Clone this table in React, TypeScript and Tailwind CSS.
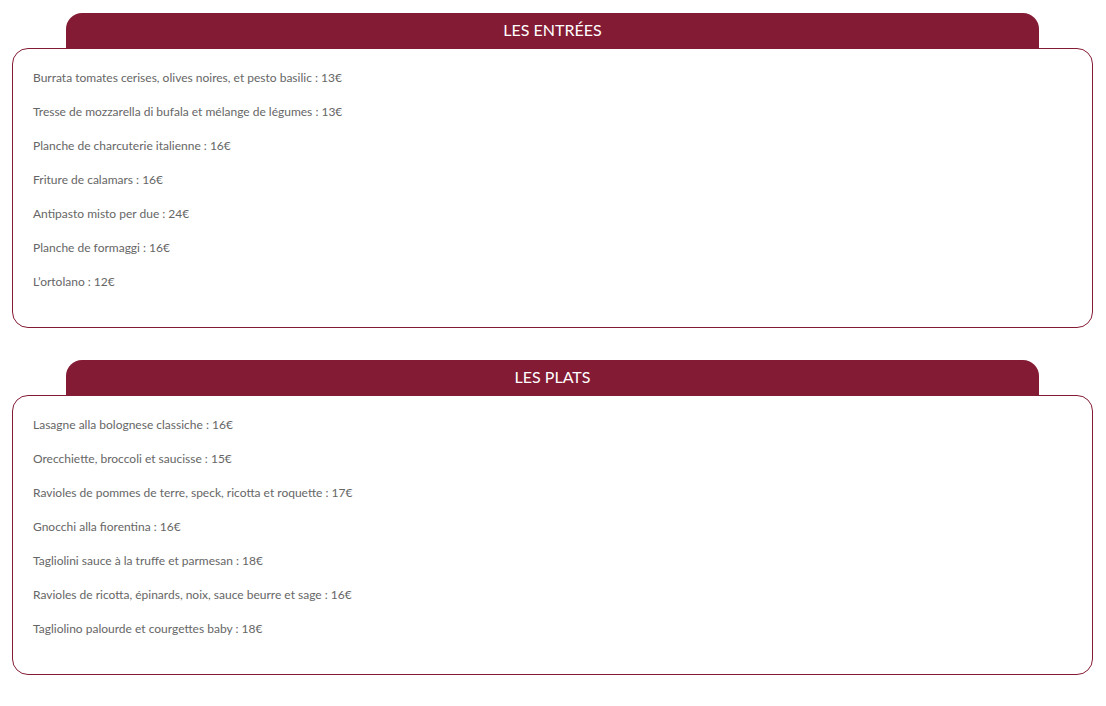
import React from "react";

const sections = [
  {
    title: "LES ENTRÉES",
    items: [
      "Burrata tomates cerises, olives noires, et pesto basilic : 13€",
      "Tresse de mozzarella di bufala et mélange de légumes : 13€",
      "Planche de charcuterie italienne : 16€",
      "Friture de calamars : 16€",
      "Antipasto misto per due : 24€",
      "Planche de formaggi : 16€",
      "L’ortolano : 12€",
    ],
  },
  {
    title: "LES PLATS",
    items: [
      "Lasagne alla bolognese classiche : 16€",
      "Orecchiette, broccoli et saucisse : 15€",
      "Ravioles de pommes de terre, speck, ricotta et roquette : 17€",
      "Gnocchi alla fiorentina : 16€",
      "Tagliolini sauce à la truffe et parmesan : 18€",
      "Ravioles de ricotta, épinards, noix, sauce beurre et sage : 16€",
      "Tagliolino palourde et courgettes baby : 18€",
    ],
  },
];

function MenuSection({ title, items }: { title: string; items: string[] }) {
  return (
    <section className="w-[1081px]">
      <div className="mx-[54px] h-[35px] rounded-t-[16px] bg-[#831b34] flex items-center justify-center">
        <h2 className="text-white text-[16px] leading-none pb-[2px]">{title}</h2>
      </div>
      <div className="border border-[#831b34] rounded-[16px] pt-[20px] px-[20px] h-[280px]">
        {items.map((item) => (
          <p key={item} className="text-[12px] leading-[17px] mb-[17px] text-[#666666]">
            {item}
          </p>
        ))}
      </div>
    </section>
  );
}

export default function App() {
  return (
    <div className="min-h-screen bg-white pt-[13px] pl-[12px] flex flex-col gap-[32px] font-['Lato',sans-serif]">
      {sections.map((s) => (
        <MenuSection key={s.title} title={s.title} items={s.items} />
      ))}
    </div>
  );
}
